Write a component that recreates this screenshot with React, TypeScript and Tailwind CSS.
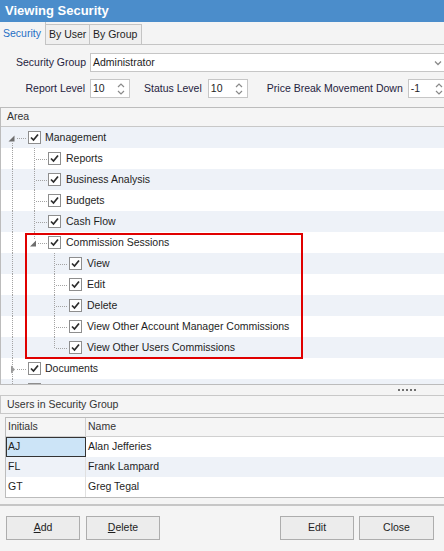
import React from "react";

const FONT = { fontFamily: '"Liberation Sans", Arial, sans-serif' };

function Check() {
  return (
    <div className="w-[13px] h-[13px] shrink-0 border border-[#8e8e8e] bg-white flex items-center justify-center">
      <svg width="11" height="11" viewBox="0 0 11 11">
        <path d="M2 5.5 L4.5 8 L9 2.5" fill="none" stroke="#2b2b2b" strokeWidth="1.7" />
      </svg>
    </div>
  );
}

const DOT = { stroke: "#a3a3a3", strokeWidth: 1, strokeDasharray: "1 1", shapeRendering: "crispEdges" as const };

type Kind = "root-first" | "root-collapsed" | "l1" | "l1-exp" | "l2" | "l2-last";

function Guides({ kind }: { kind: Kind }) {
  const w = kind.startsWith("root") ? 27 : kind.startsWith("l1") ? 47 : 68;
  return (
    <svg width={w} height="21" viewBox={`0 0 ${w} 21`} className="shrink-0">
      {kind === "root-first" && (
        <>
          <line x1="11.5" y1="16" x2="11.5" y2="21" {...DOT} />
          <line x1="16" y1="11.5" x2="26" y2="11.5" {...DOT} />
          <polygon points="13.5,8.5 13.5,14.5 7.5,14.5" fill="#6e6e6e" />
        </>
      )}
      {kind === "root-collapsed" && (
        <>
          <line x1="11.5" y1="0" x2="11.5" y2="21" {...DOT} />
          <line x1="16" y1="11.5" x2="26" y2="11.5" {...DOT} />
          <polygon points="10,7.5 14,11.5 10,15.5" fill="#9a9a9a" />
        </>
      )}
      {kind === "l1" && (
        <>
          <line x1="11.5" y1="0" x2="11.5" y2="21" {...DOT} />
          <line x1="33.5" y1="0" x2="33.5" y2="21" {...DOT} />
          <line x1="35" y1="11.5" x2="46" y2="11.5" {...DOT} />
        </>
      )}
      {kind === "l1-exp" && (
        <>
          <line x1="11.5" y1="0" x2="11.5" y2="21" {...DOT} />
          <line x1="33.5" y1="0" x2="33.5" y2="7" {...DOT} />
          <line x1="37" y1="11.5" x2="46" y2="11.5" {...DOT} />
          <polygon points="35,8.5 35,14.5 29,14.5" fill="#6e6e6e" />
        </>
      )}
      {(kind === "l2" || kind === "l2-last") && (
        <>
          <line x1="11.5" y1="0" x2="11.5" y2="21" {...DOT} />
          <line x1="53.5" y1="0" x2="53.5" y2={kind === "l2" ? 21 : 11.5} {...DOT} />
          <line x1="55" y1="11.5" x2="67" y2="11.5" {...DOT} />
        </>
      )}
    </svg>
  );
}

function TreeRow({ label, kind, light }: { label: string; kind: Kind; light: boolean }) {
  return (
    <div className={`h-[21px] shrink-0 flex items-center ${light ? "bg-[#eef2f8]" : "bg-white"}`}>
      <Guides kind={kind} />
      <Check />
      <span className={`${kind.startsWith("root") ? "ml-[4px]" : "ml-[5px]"} text-[10.5px] text-[#1e1e1e] whitespace-nowrap`}>{label}</span>
    </div>
  );
}

function Spinner() {
  return (
    <svg width="8" height="14" viewBox="0 0 8 14" className="shrink-0">
      <path d="M1 5 L4 2 L7 5" fill="none" stroke="#8a8a8a" strokeWidth="1.2" />
      <path d="M1 9 L4 12 L7 9" fill="none" stroke="#8a8a8a" strokeWidth="1.2" />
    </svg>
  );
}

function SpinBox({ value, w }: { value: string; w: string }) {
  return (
    <div className={`h-[19px] ${w} border border-[#c6c6c6] bg-white flex items-center pl-[2px] pr-[4px] shrink-0`}>
      <span className="flex-1 text-[10.5px] text-[#1e1e1e]">{value}</span>
      <Spinner />
    </div>
  );
}

function Btn({ children, w = "w-[74px]" }: { children: React.ReactNode; w?: string }) {
  return (
    <div className={`h-[24px] ${w} shrink-0 border border-[#adadad] bg-[#ececec] flex items-center justify-center text-[10.5px] text-[#1e1e1e]`}>
      {children}
    </div>
  );
}

export default function App() {
  const tree: { label: string; kind: Kind }[] = [
    { label: "Management", kind: "root-first" },
    { label: "Reports", kind: "l1" },
    { label: "Business Analysis", kind: "l1" },
    { label: "Budgets", kind: "l1" },
    { label: "Cash Flow", kind: "l1" },
  ];
  const boxed: { label: string; kind: Kind }[] = [
    { label: "Commission Sessions", kind: "l1-exp" },
    { label: "View", kind: "l2" },
    { label: "Edit", kind: "l2" },
    { label: "Delete", kind: "l2" },
    { label: "View Other Account Manager Commissions", kind: "l2" },
    { label: "View Other Users Commissions", kind: "l2-last" },
  ];
  const after: { label: string; kind: Kind }[] = [
    { label: "Documents", kind: "root-collapsed" },
    { label: "", kind: "root-collapsed" },
  ];

  return (
    <div style={FONT} className="w-[444px] h-[551px] bg-[#f4f4f4] overflow-hidden flex flex-col">
      {/* Title */}
      <div className="h-[22px] shrink-0 bg-[#4b8dcb] flex items-center pl-[5px] text-white font-bold text-[13px]">
        Viewing Security
      </div>

      {/* Tabs */}
      <div className="h-[23px] shrink-0 flex items-end">
        <div className="h-[23px] w-[46px] shrink-0 border-r border-[#c4c4c4] bg-[#f4f4f4] flex items-center pl-[3px] text-[10.5px] text-[#1f6fc5]">
          Security
        </div>
        <div className="h-[21px] w-[44px] shrink-0 border-t border-r border-b border-[#c4c4c4] bg-[#efefef] flex items-center pl-[3px] text-[10.5px] text-[#1e1e1e]">
          By User
        </div>
        <div className="h-[21px] w-[52px] shrink-0 border-t border-r border-b border-[#c4c4c4] bg-[#efefef] flex items-center pl-[3px] text-[10.5px] text-[#1e1e1e]">
          By Group
        </div>
        <div className="flex-1 h-[21px] border-b border-[#c4c4c4]" />
      </div>

      {/* Form rows */}
      <div className="mt-[8px] h-[19px] shrink-0 flex items-center">
        <div className="w-[86px] shrink-0 text-right text-[10.5px] text-[#1f2340] whitespace-nowrap">Security Group</div>
        <div className="ml-[4px] h-[19px] w-[362px] shrink-0 border border-[#c6c6c6] bg-white flex items-center pl-[2px] pr-[9px]">
          <span className="flex-1 text-[10.5px] text-[#1e1e1e]">Administrator</span>
          <svg width="8" height="6" viewBox="0 0 8 6">
            <path d="M1 1.5 L4 4.5 L7 1.5" fill="none" stroke="#8a8a8a" strokeWidth="1.3" />
          </svg>
        </div>
      </div>

      <div className="mt-[7px] h-[19px] shrink-0 flex items-center">
        <div className="w-[85px] shrink-0 text-right text-[10.5px] text-[#1f2340] whitespace-nowrap">Report Level</div>
        <div className="ml-[5px] shrink-0"><SpinBox value="10" w="w-[40px]" /></div>
        <div className="ml-[14px] shrink-0 text-[10.5px] text-[#1f2340] whitespace-nowrap">Status Level</div>
        <div className="ml-[6px] shrink-0"><SpinBox value="10" w="w-[40px]" /></div>
        <div className="ml-[19px] shrink-0 text-[10.5px] text-[#1f2340] whitespace-nowrap">Price Break Movement Down</div>
        <div className="ml-[5px] shrink-0"><SpinBox value="-1" w="w-[40px]" /></div>
      </div>

      {/* Area grid */}
      <div className="mt-[9px] shrink-0 border-t border-b border-l border-[#bcbcbc] bg-white">
        <div className="h-[19px] border-b border-[#c8c8c8] bg-[#f5f5f5] flex items-center pl-[6px] text-[10.5px] text-[#333]">
          Area
        </div>
        <div className="h-[257px] overflow-hidden flex flex-col">
          {tree.map((r, i) => (
            <TreeRow key={r.label} label={r.label} kind={r.kind} light={i % 2 === 0} />
          ))}
          <div className="relative shrink-0">
            {boxed.map((r, i) => (
              <TreeRow key={r.label} label={r.label} kind={r.kind} light={(i + 5) % 2 === 0} />
            ))}
            <div className="absolute left-[24px] w-[278px] top-[1px] bottom-[-1px] border-2 border-[#e00000] pointer-events-none" />
          </div>
          {after.map((r, i) => (
            <TreeRow key={i} label={r.label} kind={r.kind} light={(i + 11) % 2 === 0} />
          ))}
        </div>
      </div>

      {/* Splitter */}
      <div className="h-[10px] shrink-0 flex items-center justify-end pr-[28px] gap-[2px]">
        <div className="w-[2px] h-[2px] bg-[#707070]" />
        <div className="w-[2px] h-[2px] bg-[#707070]" />
        <div className="w-[2px] h-[2px] bg-[#707070]" />
        <div className="w-[2px] h-[2px] bg-[#707070]" />
        <div className="w-[2px] h-[2px] bg-[#707070]" />
      </div>

      {/* Users group */}
      <div className="h-[19px] shrink-0 border-t border-b border-l border-[#c8c8c8] bg-[#f5f5f5] flex items-center pl-[6px] text-[10.5px] text-[#333]">
        Users in Security Group
      </div>

      <div className="mt-[3px] ml-[5px] shrink-0 border-t border-b border-l border-[#bcbcbc] bg-white">
        <div className="h-[19px] flex bg-[#f5f5f5] border-b border-[#d0d0d0] text-[10.5px] text-[#333]">
          <div className="w-[80px] border-r border-[#d0d0d0] flex items-center pl-[2px]">Initials</div>
          <div className="flex-1 flex items-center pl-[2px]">Name</div>
        </div>
        <div className="h-[20px] flex text-[10.5px] text-[#1e1e1e]">
          <div className="w-[80px] bg-[#cce4f7] border border-[#333] flex items-center pl-[1px]">AJ</div>
          <div className="flex-1 flex items-center pl-[2px]">Alan Jefferies</div>
        </div>
        <div className="h-[20px] flex bg-[#eef2f8] text-[10.5px] text-[#1e1e1e]">
          <div className="w-[80px] border-r border-[#e0e0e0] flex items-center pl-[2px]">FL</div>
          <div className="flex-1 flex items-center pl-[2px]">Frank Lampard</div>
        </div>
        <div className="h-[20px] flex text-[10.5px] text-[#1e1e1e]">
          <div className="w-[80px] border-r border-[#e0e0e0] flex items-center pl-[2px]">GT</div>
          <div className="flex-1 flex items-center pl-[2px]">Greg Tegal</div>
        </div>
      </div>

      <div className="mt-[6px] h-[2px] shrink-0 bg-[#c6c6c6]" />

      {/* Buttons */}
      <div className="mt-[10px] h-[24px] shrink-0 flex items-center pl-[6px]">
        <Btn><span><span className="underline">A</span>dd</span></Btn>
        <div className="ml-[6px] shrink-0"><Btn><span><span className="underline">D</span>elete</span></Btn></div>
        <div className="ml-[120px] shrink-0"><Btn>Edit</Btn></div>
        <div className="ml-[5px] shrink-0"><Btn w="w-[75px]">Close</Btn></div>
      </div>
    </div>
  );
}
